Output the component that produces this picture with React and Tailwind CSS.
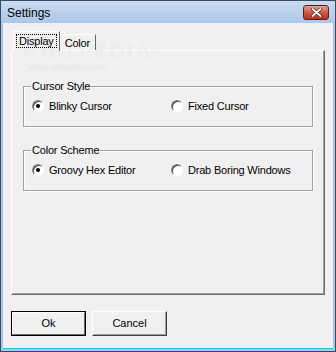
import { useState } from "react";

const Radio = ({ checked, label, onClick }) => (
  <button className="flex items-center gap-[5px] text-[11px] tracking-[-0.2px] text-black" onClick={onClick}>
    <span className="relative w-[12px] h-[12px] rounded-full border border-t-[#808080] border-l-[#808080] border-r-[#ffffff] border-b-[#ffffff] bg-white shadow-[inset_1px_1px_0_#404040]">
      {checked && (
        <span className="absolute left-[3px] top-[3px] w-[4px] h-[4px] rounded-full bg-black" />
      )}
    </span>
    <span>{label}</span>
  </button>
);

const GroupBox = ({ title, children }) => (
  <div className="relative h-[41px] border border-[#a0a0a0] shadow-[inset_1px_1px_0_#ffffff,1px_1px_0_#ffffff]">
    <span className="absolute left-[7px] -top-[8px] bg-[#f0f0f0] px-[1px] text-[11px] tracking-[-0.2px] leading-[14px]">
      {title}
    </span>
    {children}
  </div>
);

const App = () => {
  const [tab, setTab] = useState("display");
  const [cursor, setCursor] = useState("blinky");
  const [scheme, setScheme] = useState("groovy");

  return (
    <div className="w-[336px] h-[352px] flex flex-col bg-[#a9c4e6] border border-[#3b4a5c] font-['Liberation_Sans',sans-serif]">
      {/* Title bar */}
      <div className="h-[22px] flex items-center justify-between pl-[6px] pr-[6px] bg-gradient-to-b from-[#c9dbf1] to-[#acc7e8]">
        <span className="text-[12px] text-black pt-[2px]">Settings</span>
        <button className="w-[26px] h-[15px] mt-[1px] rounded-[3px] border border-[#5c1f16] bg-gradient-to-b from-[#e6a08f] via-[#cf5a43] to-[#b3361f] flex items-center justify-center">
          <svg width="11" height="9" viewBox="0 0 11 9">
            <path d="M1.5 1 L9.5 8 M9.5 1 L1.5 8" stroke="#3a1a14" strokeWidth="3" strokeLinecap="round" />
            <path d="M1.5 1 L9.5 8 M9.5 1 L1.5 8" stroke="#ffffff" strokeWidth="1.8" strokeLinecap="round" />
          </svg>
        </button>
      </div>

      {/* Body */}
      <div className="flex-1 mx-[2px] mb-[2px] bg-[#f0f0f0] border-b-[1px] border-[#30c0e8] px-[8px] pt-[8px] flex flex-col relative">
        {/* watermark */}
        <span className="absolute left-[14px] top-[11px] text-[22px] tracking-[2px] text-[#ebebeb] font-['Liberation_Serif',serif] pointer-events-none">
          SOFTPEDIA<sup className="text-[7px]">™</sup>
        </span>
        <span className="absolute left-[26px] top-[38px] text-[9px] text-[#e6e6e6] pointer-events-none">
          www.softpedia.com
        </span>

        {/* Tabs */}
        <div className="flex items-end h-[19px] pl-[2px] relative z-10">
          <button
            onClick={() => setTab("display")}
            className={`px-[3px] border-t border-l border-r border-t-white border-l-white border-r-[#696969] bg-[#f0f0f0] text-[11px] tracking-[-0.2px] ${tab === "display" ? "h-[20px] -mb-[1px]" : "h-[16px]"}`}
          >
            <span className={`px-[2px] ${tab === "display" ? "outline outline-1 outline-dotted outline-black" : ""}`}>Display</span>
          </button>
          <button
            onClick={() => setTab("color")}
            className={`px-[5px] border-t border-r border-t-white border-r-[#696969] bg-[#f0f0f0] text-[11px] tracking-[-0.2px] ${tab === "color" ? "h-[20px] -mb-[1px] border-l border-l-white" : "h-[16px]"}`}
          >
            Color
          </button>
        </div>

        {/* Tab panel */}
        <div className="h-[245px] border border-t-white border-l-white border-r-[#696969] border-b-[#696969] shadow-[inset_-1px_-1px_0_#a0a0a0] px-[11px] pt-[35px] flex flex-col gap-[23px]">
          {tab === "display" ? (
            <>
              <GroupBox title="Cursor Style">
                <div className="flex items-center h-full pl-[8px] pb-[1px]">
                  <div className="w-[139px]">
                    <Radio checked={cursor === "blinky"} label="Blinky Cursor" onClick={() => setCursor("blinky")} />
                  </div>
                  <Radio checked={cursor === "fixed"} label="Fixed Cursor" onClick={() => setCursor("fixed")} />
                </div>
              </GroupBox>
              <GroupBox title="Color Scheme">
                <div className="flex items-center h-full pl-[8px] pb-[1px]">
                  <div className="w-[139px]">
                    <Radio checked={scheme === "groovy"} label="Groovy Hex Editor" onClick={() => setScheme("groovy")} />
                  </div>
                  <Radio checked={scheme === "drab"} label="Drab Boring Windows" onClick={() => setScheme("drab")} />
                </div>
              </GroupBox>
            </>
          ) : null}
        </div>

        {/* Buttons */}
        <div className="flex gap-[6px] mt-[16px]">
          <button className="w-[75px] h-[25px] border border-black bg-[#f0f0f0] text-[11px]">
            <span className="flex items-center justify-center w-full h-full border border-t-white border-l-white border-r-[#696969] border-b-[#696969]">
              Ok
            </span>
          </button>
          <button className="w-[75px] h-[25px] border border-t-white border-l-white border-r-[#404040] border-b-[#404040] bg-[#f0f0f0] text-[11px] shadow-[inset_-1px_-1px_0_#a0a0a0]">
            Cancel
          </button>
        </div>
      </div>
    </div>
  );
};

export default App;
